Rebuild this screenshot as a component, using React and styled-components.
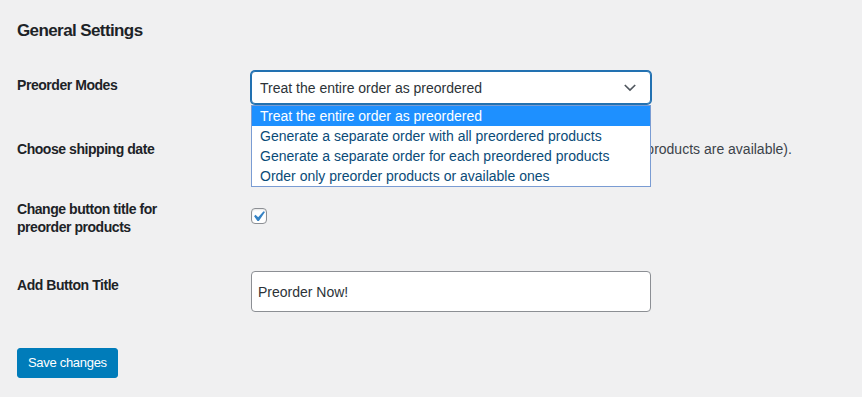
import React from "react";
import styled, { createGlobalStyle } from "styled-components";

const GlobalStyle = createGlobalStyle`
  html, body {
    margin: 0;
    padding: 0;
    background: #f0f0f1;
  }
  body {
    font-family: "Liberation Sans", Arial, sans-serif;
    color: #3c434a;
    font-size: 14px;
  }
  * { box-sizing: border-box; }
`;

const Page = styled.div`
  padding: 20px 17px 0;
`;

const Heading = styled.h2`
  margin: 0;
  font-size: 17px;
  line-height: 22px;
  font-weight: 700;
  letter-spacing: -0.6px;
  color: #1d2327;
`;

const FormTable = styled.div`
  margin-top: 14px;
  display: flex;
  flex-direction: column;
`;

const Row = styled.div`
  display: grid;
  grid-template-columns: 200px 400px;
  column-gap: 34px;
  align-items: start;
`;

const Label = styled.div`
  padding: 20px 30px 20px 0;
  font-size: 14px;
  line-height: 1.3;
  font-weight: 700;
  letter-spacing: -0.45px;
  color: #1d2327;
`;

const Field = styled.div`
  padding: 15px 0 ${(p) => p.$pb || 15}px;
  line-height: ${(p) => p.$lh || "normal"};
`;

const SelectWrap = styled.div`
  position: relative;
  width: 400px;
`;

const SelectBox = styled.div`
  height: 33px;
  border: 1px solid #2271b1;
  box-shadow: 0 0 0 1px #2271b1;
  border-radius: 4px;
  background: #fff;
  padding: 0 24px 0 8px;
  display: flex;
  align-items: center;
  justify-content: space-between;
  font-size: 14px;
  color: #2c3338;
`;

const Chevron = styled.svg`
  flex: none;
  margin-right: -10px;
`;

const Dropdown = styled.ul`
  position: absolute;
  top: 34px;
  left: 0;
  width: 400px;
  margin: 0;
  padding: 0;
  list-style: none;
  background: #fff;
  border: 1px solid #7a9cd3;
  z-index: 10;
`;

const Option = styled.li`
  height: 20px;
  line-height: 20px;
  padding-left: 8px;
  font-size: 14px;
  white-space: nowrap;
  color: ${(p) => (p.$active ? "#fff" : "#0a4b78")};
  background: ${(p) => (p.$active ? "#1e90ff" : "transparent")};
`;

const Description = styled.span`
  font-size: 14px;
  color: #3c434a;
  white-space: nowrap;
`;

const CheckBox = styled.span`
  display: block;
  width: 16px;
  height: 16px;
  margin-top: 13px;
  border: 1px solid #8c8f94;
  border-radius: 4px;
  background: #fff;
  box-shadow: inset 0 1px 2px rgba(0, 0, 0, 0.1);
  svg { display: block; overflow: visible; }
`;

const TextInput = styled.input`
  display: block;
  width: 400px;
  height: 41px;
  border: 1px solid #8c8f94;
  border-radius: 4px;
  background: #fff;
  padding: 0 6px;
  margin: 0;
  font-family: "Liberation Sans", Arial, sans-serif;
  font-size: 14px;
  color: #2c3338;
  outline: none;
`;

const Submit = styled.div`
  margin-top: 21px;
`;

const Button = styled.button`
  height: 30px;
  padding: 0 10px;
  border: 1px solid #007cba;
  border-radius: 3px;
  background: #007cba;
  color: #fff;
  font-family: "Liberation Sans", Arial, sans-serif;
  font-size: 13px;
  letter-spacing: -0.3px;
  line-height: 28px;
  cursor: pointer;
`;

const options = [
  "Treat the entire order as preordered",
  "Generate a separate order with all preordered products",
  "Generate a separate order for each preordered products",
  "Order only preorder products or available ones",
];

export default function App() {
  return (
    <>
      <GlobalStyle />
      <Page>
        <Heading>General Settings</Heading>
        <FormTable>
          <Row>
            <Label>Preorder Modes</Label>
            <Field $pb={16}>
              <SelectWrap>
                <SelectBox>
                  <span>{options[0]}</span>
                  <Chevron width="12" height="8" viewBox="0 0 12 8">
                    <polyline
                      points="0.8,1 6,6 11.2,1"
                      fill="none"
                      stroke="#50575e"
                      strokeWidth="1.7"
                    />
                  </Chevron>
                </SelectBox>
                <Dropdown>
                  {options.map((o, i) => (
                    <Option key={o} $active={i === 0}>
                      {o}
                    </Option>
                  ))}
                </Dropdown>
              </SelectWrap>
            </Field>
          </Row>
          <Row>
            <Label>Choose shipping date</Label>
            <Field $lh="28px" $pb={17}>
              <Description>
                Ships the whole order on a single date (wait until all preordered products are available).
              </Description>
            </Field>
          </Row>
          <Row>
            <Label>Change button title for preorder products</Label>
            <Field>
              <CheckBox>
                <svg width="14" height="14" viewBox="3.81 2.86 13.33 13.33">
                  <path
                    d="M14.83 4.89l1.34.94-5.81 8.38H9.02L5.78 9.67l1.34-1.25 2.57 2.4z"
                    fill="#3582c4"
                  />
                </svg>
              </CheckBox>
            </Field>
          </Row>
          <Row>
            <Label>Add Button Title</Label>
            <Field>
              <TextInput defaultValue="Preorder Now!" />
            </Field>
          </Row>
        </FormTable>
        <Submit>
          <Button>Save changes</Button>
        </Submit>
      </Page>
    </>
  );
}
